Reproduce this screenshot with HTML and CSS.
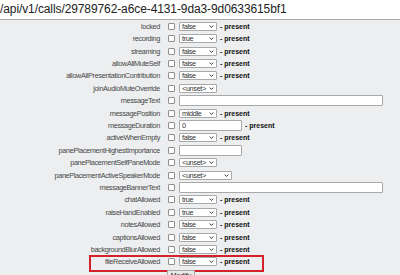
FILE: index.html
```html
<!DOCTYPE html>
<html lang="en">
<head>
    <meta charset="UTF-8">
    <title>Call parameters</title>
    <link rel="stylesheet" href="styles.css">
</head>
<body>
    <div class="url">/api/v1/calls/29789762-a6ce-4131-9da3-9d0633615bf1</div>
    <form class="params">
        <div class="row"><label>locked</label><input type="checkbox"><span class="sel">false<svg viewBox="0 0 6 4"><polyline points="0.5,0.8 3,3.2 5.5,0.8"/></svg></span><b class="present">- present</b></div>
        <div class="row"><label>recording</label><input type="checkbox"><span class="sel">true<svg viewBox="0 0 6 4"><polyline points="0.5,0.8 3,3.2 5.5,0.8"/></svg></span><b class="present">- present</b></div>
        <div class="row"><label>streaming</label><input type="checkbox"><span class="sel">false<svg viewBox="0 0 6 4"><polyline points="0.5,0.8 3,3.2 5.5,0.8"/></svg></span><b class="present">- present</b></div>
        <div class="row"><label>allowAllMuteSelf</label><input type="checkbox"><span class="sel">false<svg viewBox="0 0 6 4"><polyline points="0.5,0.8 3,3.2 5.5,0.8"/></svg></span><b class="present">- present</b></div>
        <div class="row"><label>allowAllPresentationContribution</label><input type="checkbox"><span class="sel">false<svg viewBox="0 0 6 4"><polyline points="0.5,0.8 3,3.2 5.5,0.8"/></svg></span><b class="present">- present</b></div>
        <div class="row"><label>joinAudioMuteOverride</label><input type="checkbox"><span class="sel">&lt;unset&gt;<svg viewBox="0 0 6 4"><polyline points="0.5,0.8 3,3.2 5.5,0.8"/></svg></span></div>
        <div class="row"><label>messageText</label><input type="checkbox"><input type="text" class="text wide"></div>
        <div class="row"><label>messagePosition</label><input type="checkbox"><span class="sel">middle<svg viewBox="0 0 6 4"><polyline points="0.5,0.8 3,3.2 5.5,0.8"/></svg></span><b class="present">- present</b></div>
        <div class="row"><label>messageDuration</label><input type="checkbox"><input type="text" class="text" value="0"><b class="present">- present</b></div>
        <div class="row"><label>activeWhenEmpty</label><input type="checkbox"><span class="sel">false<svg viewBox="0 0 6 4"><polyline points="0.5,0.8 3,3.2 5.5,0.8"/></svg></span><b class="present">- present</b></div>
        <div class="row"><label>panePlacementHighestImportance</label><input type="checkbox"><input type="text" class="text"></div>
        <div class="row"><label>panePlacementSelfPaneMode</label><input type="checkbox"><span class="sel">&lt;unset&gt;<svg viewBox="0 0 6 4"><polyline points="0.5,0.8 3,3.2 5.5,0.8"/></svg></span></div>
        <div class="row"><label>panePlacementActiveSpeakerMode</label><input type="checkbox"><span class="sel long">&lt;unset&gt;<svg viewBox="0 0 6 4"><polyline points="0.5,0.8 3,3.2 5.5,0.8"/></svg></span></div>
        <div class="row"><label>messageBannerText</label><input type="checkbox"><input type="text" class="text wide"></div>
        <div class="row"><label>chatAllowed</label><input type="checkbox"><span class="sel">true<svg viewBox="0 0 6 4"><polyline points="0.5,0.8 3,3.2 5.5,0.8"/></svg></span><b class="present">- present</b></div>
        <div class="row"><label>raiseHandEnabled</label><input type="checkbox"><span class="sel">true<svg viewBox="0 0 6 4"><polyline points="0.5,0.8 3,3.2 5.5,0.8"/></svg></span><b class="present">- present</b></div>
        <div class="row"><label>notesAllowed</label><input type="checkbox"><span class="sel">false<svg viewBox="0 0 6 4"><polyline points="0.5,0.8 3,3.2 5.5,0.8"/></svg></span><b class="present">- present</b></div>
        <div class="row"><label>captionsAllowed</label><input type="checkbox"><span class="sel">false<svg viewBox="0 0 6 4"><polyline points="0.5,0.8 3,3.2 5.5,0.8"/></svg></span><b class="present">- present</b></div>
        <div class="row"><label>backgroundBlurAllowed</label><input type="checkbox"><span class="sel">false<svg viewBox="0 0 6 4"><polyline points="0.5,0.8 3,3.2 5.5,0.8"/></svg></span><b class="present">- present</b></div>
        <div class="row highlight"><label>fileReceiveAllowed</label><input type="checkbox"><span class="sel">false<svg viewBox="0 0 6 4"><polyline points="0.5,0.8 3,3.2 5.5,0.8"/></svg></span><b class="present">- present</b></div>
        <div class="row"><button type="button" class="modify">Modify</button></div>
    </form>
</body>
</html>
```

FILE: styles.css
```css
body{
    margin:0;
    background-color:#eceeef;
    font-family:"Liberation Sans", Arial, sans-serif;
    overflow:hidden;
}
.url{
    height:19px;
    line-height:18px;
    background-color:#fff;
    border-bottom:1px solid #a7a9ab;
    font-size:12px;
    letter-spacing:-0.1px;
    color:#222;
    white-space:nowrap;
}
.params{
    display:flex;
    flex-direction:column;
}
.row{
    position:relative;
    height:12.42px;
    display:flex;
    align-items:center;
    font-size:7.3px;
    letter-spacing:-0.35px;
}
.row label{
    width:160px;
    text-align:right;
    color:#484848;
}
.row input[type=checkbox]{
    appearance:none;
    margin:0 0 0 8px;
    width:7px;
    height:7px;
    border:1px solid #8f8f8f;
    border-radius:1px;
    background-color:#fff;
}
.sel{
    margin-left:4px;
    width:38px;
    height:9px;
    box-sizing:border-box;
    border:1px solid #a9a9a9;
    border-radius:1px;
    background-color:#fff;
    color:#333;
    padding:0 2px;
    display:flex;
    align-items:center;
    justify-content:space-between;
}
.sel.long{
    width:53px;
}
.sel svg{
    width:5px;
    height:3px;
    fill:none;
    stroke:#222;
    stroke-width:1.2;
}
.text{
    margin:0 0 0 4px;
    width:63px;
    height:11px;
    box-sizing:border-box;
    border:1px solid #a9a9a9;
    border-radius:1px;
    padding:0 2px;
    font:inherit;
    color:#333;
}
.text.wide{
    width:204px;
}
.present{
    margin-left:3px;
    color:#111;
    font-size:7px;
    letter-spacing:0;
}
.highlight::after{
    content:"";
    position:absolute;
    left:89px;
    top:-1px;
    width:171px;
    height:13px;
    border:2px solid #d4212c;
}
.modify{
    margin:3px 0 0 167px;
    height:12px;
    width:28px;
    padding:0;
    font:inherit;
    font-size:7px;
    color:#222;
    background-color:#e8e8e8;
    border:1px solid #a9a9a9;
    border-radius:1px;
}
```
